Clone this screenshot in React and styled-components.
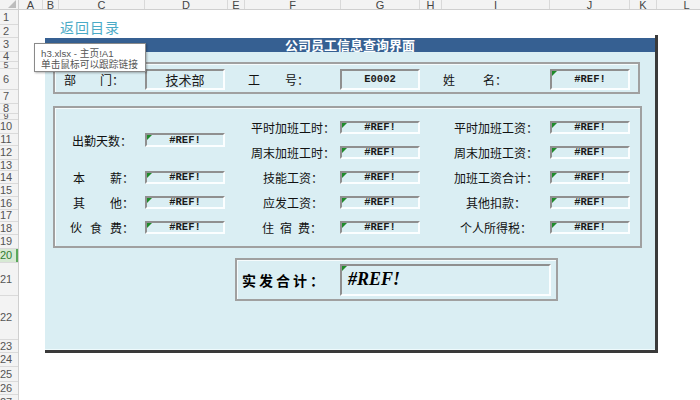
import React from 'react';
import styled, { createGlobalStyle } from 'styled-components';

const COLS = [
  ['A', 24], ['B', 16], ['C', 86], ['D', 83], ['E', 17], ['F', 96],
  ['G', 79], ['H', 22], ['I', 108], ['J', 80], ['K', 27], ['L', 60],
];
const ROWS = [15, 13, 14, 10, 7, 21, 14, 10, 6, 14, 12, 14, 11, 13, 13, 13, 12, 13, 14, 14, 33, 44, 13, 14, 15, 13, 15];
const ACTIVE_ROW = 20;

const GlobalStyle = createGlobalStyle`
  body{
    margin: 0;
    overflow: hidden;
    background: #fff;
  }
`;

export default function App(){
  return(
    <>
      <GlobalStyle />
      <Sheet>
        <Corner><CornerMark /></Corner>
        <ColHeader>
          { COLS.map(([name, w]) => <ColCell key={ name } $w={ w }>{ name }</ColCell>) }
        </ColHeader>
        <RowHeader>
          { ROWS.map((h, i) => (
            <RowCell key={ i } $h={ h } $active={ i + 1 === ACTIVE_ROW }>{ i + 1 }</RowCell>
          )) }
        </RowHeader>

        <Canvas>
          <LinkRow><BackLink>返回目录</BackLink></LinkRow>
          <PanelWrap>
            <TitleBar>公司员工信息查询界面</TitleBar>
            <PanelBody>
              <Frame $w={ 587 } $h={ 32 }>
                <FormGrid $top={ 5 } $rows="21px">
                  <Slot $c={ 1 } $r={ 1 }>
                    <Spread $w={ 60 } $ml={ 5 }><span>部</span><span>门：</span></Spread>
                  </Slot>
                  <Slot $c={ 2 } $r={ 1 }><Value $h={ 21 } $cjk>技术部</Value></Slot>
                  <Slot $c={ 4 } $r={ 1 }>
                    <Spread $w={ 61 } $ml={ 3 }><span>工</span><span>号：</span></Spread>
                  </Slot>
                  <Slot $c={ 5 } $r={ 1 }><Value $h={ 21 } $shift={ -1 }>E0002</Value></Slot>
                  <Slot $c={ 7 } $r={ 1 }>
                    <Spread $w={ 64 } $ml={ 1 }><span>姓</span><span>名：</span></Spread>
                  </Slot>
                  <Slot $c={ 8 } $r={ 1 }><Value $h={ 21 } $err>#REF!</Value></Slot>
                </FormGrid>
              </Frame>

              <Frame $w={ 589 } $h={ 142 } $mt={ 12 }>
                <FormGrid $top={ 13 } $rows="repeat(5, 13px)" $gap={ 12 }>
                  <Slot $c={ 1 } $r="1 / span 2" $center><Label>出勤天数：</Label></Slot>
                  <Slot $c={ 2 } $r="1 / span 2"><Value $h={ 14 } $err>#REF!</Value></Slot>

                  <Slot $c={ 4 } $r={ 1 } $center><Label>平时加班工时：</Label></Slot>
                  <Slot $c={ 5 } $r={ 1 }><Value $err $shift={ -1 }>#REF!</Value></Slot>
                  <Slot $c={ 7 } $r={ 1 } $center><Label>平时加班工资：</Label></Slot>
                  <Slot $c={ 8 } $r={ 1 }><Value $err>#REF!</Value></Slot>

                  <Slot $c={ 4 } $r={ 2 } $center><Label>周末加班工时：</Label></Slot>
                  <Slot $c={ 5 } $r={ 2 }><Value $err $shift={ -1 }>#REF!</Value></Slot>
                  <Slot $c={ 7 } $r={ 2 } $center><Label>周末加班工资：</Label></Slot>
                  <Slot $c={ 8 } $r={ 2 }><Value $err>#REF!</Value></Slot>

                  <Slot $c={ 1 } $r={ 3 }>
                    <Spread $w={ 61 } $ml={ 14 }><span>本</span><span>薪：</span></Spread>
                  </Slot>
                  <Slot $c={ 2 } $r={ 3 }><Value $err>#REF!</Value></Slot>
                  <Slot $c={ 4 } $r={ 3 } $center><Label>技能工资：</Label></Slot>
                  <Slot $c={ 5 } $r={ 3 }><Value $err $shift={ -1 }>#REF!</Value></Slot>
                  <Slot $c={ 7 } $r={ 3 } $center><Label>加班工资合计：</Label></Slot>
                  <Slot $c={ 8 } $r={ 3 }><Value $err>#REF!</Value></Slot>

                  <Slot $c={ 1 } $r={ 4 }>
                    <Spread $w={ 61 } $ml={ 14 }><span>其</span><span>他：</span></Spread>
                  </Slot>
                  <Slot $c={ 2 } $r={ 4 }><Value $err>#REF!</Value></Slot>
                  <Slot $c={ 4 } $r={ 4 } $center><Label>应发工资：</Label></Slot>
                  <Slot $c={ 5 } $r={ 4 }><Value $err $shift={ -1 }>#REF!</Value></Slot>
                  <Slot $c={ 7 } $r={ 4 } $center><Label>其他扣款：</Label></Slot>
                  <Slot $c={ 8 } $r={ 4 }><Value $err>#REF!</Value></Slot>

                  <Slot $c={ 1 } $r={ 5 }>
                    <Spread $w={ 64 } $ml={ 11 }><span>伙</span><span>食</span><span>费：</span></Spread>
                  </Slot>
                  <Slot $c={ 2 } $r={ 5 }><Value $err>#REF!</Value></Slot>
                  <Slot $c={ 4 } $r={ 5 }>
                    <Spread $w={ 60 } $ml={ 17 }><span>住</span><span>宿</span><span>费：</span></Spread>
                  </Slot>
                  <Slot $c={ 5 } $r={ 5 }><Value $err $shift={ -1 }>#REF!</Value></Slot>
                  <Slot $c={ 7 } $r={ 5 } $center><Label>个人所得税：</Label></Slot>
                  <Slot $c={ 8 } $r={ 5 }><Value $err>#REF!</Value></Slot>
                </FormGrid>
              </Frame>

              <Frame $w={ 323 } $h={ 43 } $mt={ 10 } $ml={ 182 }>
                <TotalRow>
                  <TotalLabel>实发合计：</TotalLabel>
                  <TotalValue>#REF!</TotalValue>
                </TotalRow>
              </Frame>
            </PanelBody>
          </PanelWrap>
        </Canvas>

        <Tip>
          <div>h3.xlsx - 主页!A1</div>
          <div>单击鼠标可以跟踪链接</div>
        </Tip>
      </Sheet>
    </>
  )
}


const Sheet = styled.div`
  position: relative;
  width: 700px;
  height: 400px;
  overflow: hidden;
  display: grid;
  grid-template-columns: 19px 1fr;
  grid-template-rows: 10px 1fr;
  background: #fff;
  font-family: "Noto Sans CJK SC", sans-serif;
`;

const Corner = styled.div`
  display: flex;
  align-items: flex-end;
  justify-content: flex-end;
  padding: 0 2px 1px 0;
  box-sizing: border-box;
  background: #f3f3f3;
  border-right: 1px solid #cfcfcf;
  border-bottom: 1px solid #cfcfcf;
`;

const CornerMark = styled.div`
  width: 0;
  height: 0;
  border-left: 8px solid transparent;
  border-bottom: 8px solid #bdbdbd;
`;

const ColHeader = styled.div`
  display: flex;
  background: #f3f3f3;
  border-bottom: 1px solid #cfcfcf;
  overflow: hidden;
`;

const ColCell = styled.div`
  flex: 0 0 ${ p => p.$w }px;
  box-sizing: border-box;
  border-right: 1px solid #d9d9d9;
  text-align: center;
  font: 11px/10px "Liberation Sans", sans-serif;
  color: #444;
`;

const RowHeader = styled.div`
  display: flex;
  flex-direction: column;
  background: #f3f3f3;
  border-right: 1px solid #cfcfcf;
`;

const RowCell = styled.div`
  flex: 0 0 ${ p => p.$h }px;
  box-sizing: border-box;
  display: flex;
  align-items: center;
  justify-content: center;
  padding-right: 6px;
  overflow: hidden;
  border-bottom: 1px solid #dadada;
  font: ${ p => p.$h < 9 ? 9 : 11 }px/1 "Liberation Sans", sans-serif;
  color: ${ p => p.$active ? '#2f7d32' : '#555' };
  background: ${ p => p.$active ? '#d7e9d4' : 'transparent' };
  box-shadow: ${ p => p.$active ? 'inset -2px 0 0 #5aa85a' : 'none' };
`;

const Canvas = styled.div`
  display: flex;
  flex-direction: column;
`;

const LinkRow = styled.div`
  height: 25px;
  display: flex;
  align-items: flex-end;
  padding-left: 41px;
`;

const BackLink = styled.span`
  color: #4aaac6;
  font-size: 14px;
  line-height: 17px;
  letter-spacing: 1px;
  transform: translateY(1px);
`;

const PanelWrap = styled.div`
  margin-left: 26px;
  width: 613px;
  padding-top: 3px;
  box-sizing: border-box;
  border-right: 3px solid #3a3a3a;
  border-bottom: 3px solid #3a3a3a;
`;

const TitleBar = styled.div`
  height: 14px;
  background: #366092;
  color: #fff;
  font-size: 13px;
  font-weight: 700;
  line-height: 14px;
  text-align: center;
`;

const PanelBody = styled.div`
  height: 298px;
  box-sizing: border-box;
  padding: 10px 0 0 8px;
  display: flex;
  flex-direction: column;
  align-items: flex-start;
  background: #daeef3;
  box-shadow: inset 0 -1px 0 #eefafc;
`;

const Frame = styled.div`
  width: ${ p => p.$w }px;
  height: ${ p => p.$h }px;
  margin-top: ${ p => p.$mt || 0 }px;
  margin-left: ${ p => p.$ml || 0 }px;
  box-sizing: border-box;
  border: 2px solid #a0a0a0;
  box-shadow: inset 1px 1px 0 #f6fbfc;
`;

const FormGrid = styled.div`
  display: grid;
  grid-template-columns: 86px 83px 17px 96px 79px 22px 108px 80px;
  grid-template-rows: ${ p => p.$rows };
  row-gap: ${ p => p.$gap || 0 }px;
  padding: ${ p => p.$top }px 0 0 4px;
`;

const Slot = styled.div`
  grid-column: ${ p => p.$c };
  grid-row: ${ p => p.$r };
  display: flex;
  align-items: center;
  justify-content: ${ p => p.$center ? 'center' : 'flex-start' };
`;

const Label = styled.span`
  font-size: 12px;
  line-height: 13px;
  color: #111;
  white-space: nowrap;
`;

const Spread = styled(Label)`
  display: flex;
  justify-content: space-between;
  width: ${ p => p.$w }px;
  margin-left: ${ p => p.$ml }px;
`;

const Value = styled.div`
  position: relative;
  width: 80px;
  height: ${ p => p.$h || 13 }px;
  margin-left: ${ p => p.$shift || 0 }px;
  box-sizing: border-box;
  display: flex;
  align-items: center;
  justify-content: center;
  border-top: 2px solid #8f8f8f;
  border-left: 2px solid #8f8f8f;
  border-bottom: 2px solid #fbfeff;
  border-right: 2px solid #fbfeff;
  color: #1a1a1a;
  font: ${ p => p.$cjk ? '13px "Noto Sans CJK SC", sans-serif' : '700 10.5px "Liberation Mono", monospace' };
  line-height: 1;

  &::before{
    content: '';
    display: ${ p => p.$err ? 'block' : 'none' };
    position: absolute;
    top: 0;
    left: 0;
    border-top: 5px solid #1f8a2a;
    border-right: 5px solid transparent;
  }
`;

const TotalRow = styled.div`
  height: 100%;
  display: flex;
  align-items: center;
  padding-left: 5px;
`;

const TotalLabel = styled.span`
  width: 98px;
  font-size: 14px;
  font-weight: 700;
  letter-spacing: 3px;
  color: #000;
  white-space: nowrap;
`;

const TotalValue = styled(Value)`
  width: 211px;
  height: 32px;
  justify-content: flex-start;
  padding-left: 6px;
  font: italic 700 18px "Liberation Serif", serif;
  color: #000;

  &::before{
    display: block;
  }
`;

const Tip = styled.div`
  position: absolute;
  left: 34px;
  top: 43px;
  width: 112px;
  height: 29px;
  box-sizing: border-box;
  padding: 4px 0 0 6px;
  background: #fff;
  border: 1px solid #8a8a8a;
  box-shadow: 1px 1px 2px rgba(0, 0, 0, 0.3);
  font-family: "Liberation Sans", "Noto Sans CJK SC", sans-serif;
  font-size: 9.7px;
  line-height: 11px;
  color: #555;
  white-space: nowrap;
`;
